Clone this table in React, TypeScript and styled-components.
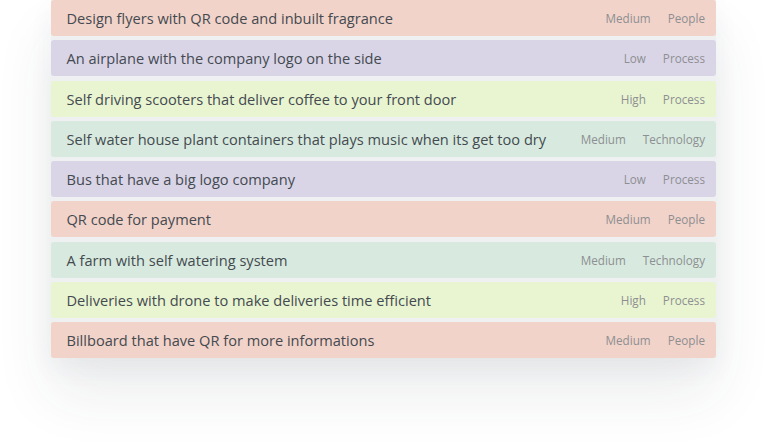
import React from "react";
import styled, { createGlobalStyle } from "styled-components";

const Global = createGlobalStyle`
  html, body { margin: 0; padding: 0; background: #ffffff; }
  body { font-family: "Open Sans", "Liberation Sans", sans-serif; overflow: hidden; }
`;

const Page = styled.div`
  width: 768px;
  height: 443px;
  display: flex;
  justify-content: center;
  align-items: flex-start;
  background: #ffffff;
  overflow: hidden;
`;

const List = styled.div`
  width: 665px;
  margin-left: -1px;
  margin-top: 0;
  display: flex;
  flex-direction: column;
  gap: 4.25px;
  background: #eef0f2;
  box-shadow: 0 36px 56px rgba(40, 50, 70, 0.09), 0 10px 24px rgba(40, 50, 70, 0.05);
`;

const palette = {
  people: "#f2d3c9",
  process: "#d9d5e7",
  high: "#e9f5d1",
  tech: "#d8eadf",
} as const;

type Tone = keyof typeof palette;

const Row = styled.div<{ $tone: Tone }>`
  height: 36px;
  display: flex;
  align-items: center;
  padding: 0 11px 0 15.5px;
  border-radius: 3px;
  background: ${(p) => palette[p.$tone]};
`;

const Title = styled.div`
  flex: 1;
  font-size: 14.6px;
  color: #444a50;
  white-space: nowrap;
`;

const Tags = styled.div`
  display: flex;
  gap: 17px;
  font-size: 11.7px;
  color: #8d8f92;
`;

const items: { title: string; level: string; cat: string; tone: Tone }[] = [
  { title: "Design flyers with QR code and inbuilt fragrance", level: "Medium", cat: "People", tone: "people" },
  { title: "An airplane with the company logo on the side", level: "Low", cat: "Process", tone: "process" },
  { title: "Self driving scooters that deliver coffee to your front door", level: "High", cat: "Process", tone: "high" },
  { title: "Self water house plant containers that plays music when its get too dry", level: "Medium", cat: "Technology", tone: "tech" },
  { title: "Bus that have a big logo company", level: "Low", cat: "Process", tone: "process" },
  { title: "QR code for payment", level: "Medium", cat: "People", tone: "people" },
  { title: "A farm with self watering system", level: "Medium", cat: "Technology", tone: "tech" },
  { title: "Deliveries with drone to make deliveries time efficient", level: "High", cat: "Process", tone: "high" },
  { title: "Billboard that have QR for more informations", level: "Medium", cat: "People", tone: "people" },
];

export default function App() {
  return (
    <Page>
      <Global />
      <List>
        {items.map((it, i) => (
          <Row key={i} $tone={it.tone}>
            <Title>{it.title}</Title>
            <Tags>
              <span>{it.level}</span>
              <span>{it.cat}</span>
            </Tags>
          </Row>
        ))}
      </List>
    </Page>
  );
}
